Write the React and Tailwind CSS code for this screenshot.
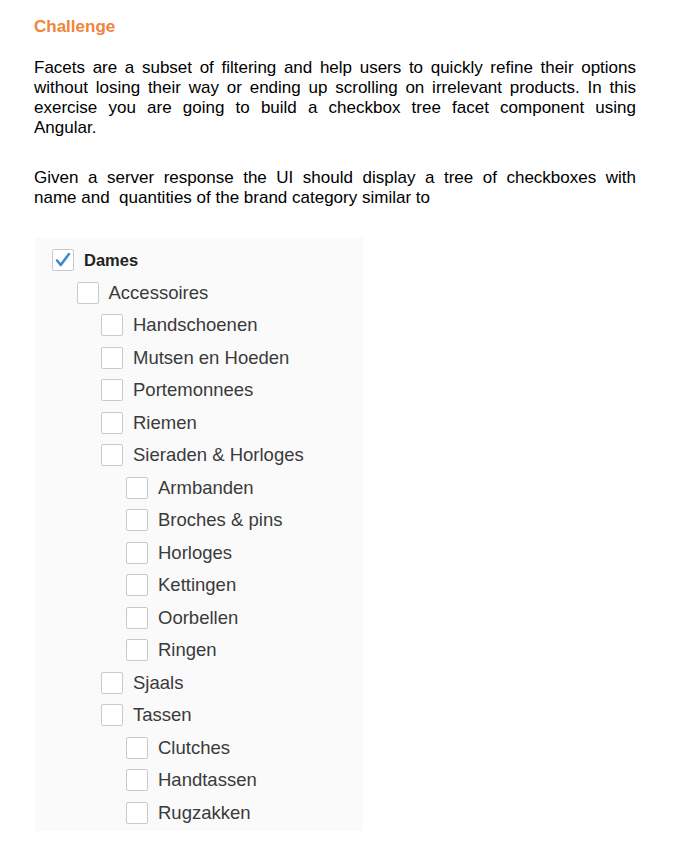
const tree = [
  { name: 'Dames', level: 0, checked: true },
  { name: 'Accessoires', level: 1 },
  { name: 'Handschoenen', level: 2 },
  { name: 'Mutsen en Hoeden', level: 2 },
  { name: 'Portemonnees', level: 2 },
  { name: 'Riemen', level: 2 },
  { name: 'Sieraden & Horloges', level: 2 },
  { name: 'Armbanden', level: 3 },
  { name: 'Broches & pins', level: 3 },
  { name: 'Horloges', level: 3 },
  { name: 'Kettingen', level: 3 },
  { name: 'Oorbellen', level: 3 },
  { name: 'Ringen', level: 3 },
  { name: 'Sjaals', level: 2 },
  { name: 'Tassen', level: 2 },
  { name: 'Clutches', level: 3 },
  { name: 'Handtassen', level: 3 },
  { name: 'Rugzakken', level: 3 },
]

// indent per level, written out so tailwind picks them up
const indent = ['pl-[17px]', 'pl-[41.5px]', 'pl-[66px]', 'pl-[91px]']

function Checkbox({ checked }) {
  return (
    <span className="w-[22px] h-[22px] shrink-0 border-[1.5px] border-[#c9c9c9] rounded-[2px] bg-white flex items-center justify-center">
      {checked && (
        <svg width="22" height="22" viewBox="0 0 22 22">
          <polyline
            points="4.5,11.5 8.5,16.5 17.5,4.5"
            fill="none"
            stroke="#3a88cf"
            strokeWidth="2.8"
            strokeLinecap="round"
            strokeLinejoin="round"
          />
        </svg>
      )}
    </span>
  )
}

function TreeRow({ item }) {
  return (
    <div className={`h-[32.5px] flex items-center ${indent[item.level]}`}>
      <Checkbox checked={item.checked} />
      {item.level === 0 ? (
        <span className="ml-[10px] text-[16.5px] font-bold text-[#222]">{item.name}</span>
      ) : (
        <span className="ml-[10px] text-[18.5px] text-[#3a3a3a]">{item.name}</span>
      )}
    </div>
  )
}

// the document lines are kept as in the original, each full line stretched
function Line({ children, last }) {
  return (
    <div className={last ? 'text-left' : 'text-justify [text-align-last:justify]'}>{children}</div>
  )
}

export default function App() {
  return (
    <div className="w-[676px] min-h-[862px] bg-white pt-[17px] pl-[34px] font-['Liberation_Sans',Arial,sans-serif]">
      <h2 className="text-[17px] leading-[20px] font-bold text-[#f0843c]">Challenge</h2>

      <div className="mt-[21px] w-[602px] text-[17px] leading-[20px] text-black">
        <Line>Facets are a subset of filtering and help users to quickly refine their options</Line>
        <Line>without losing their way or ending up scrolling on irrelevant products. In this</Line>
        <Line>exercise you are going to build a checkbox tree facet component using</Line>
        <Line last>Angular.</Line>
      </div>

      <div className="mt-[30px] w-[602px] text-[17px] leading-[20px] text-black">
        <Line>Given a server response the UI should display a tree of checkboxes with</Line>
        <Line last>name and{'\u00a0'} quantities of the brand category similar to</Line>
      </div>

      <div className="mt-[30px] ml-[1px] w-[328px] bg-[#fafafa] pt-[6px] pb-[2px]">
        {tree.map((item) => (
          <TreeRow key={item.name} item={item} />
        ))}
      </div>
    </div>
  )
}
